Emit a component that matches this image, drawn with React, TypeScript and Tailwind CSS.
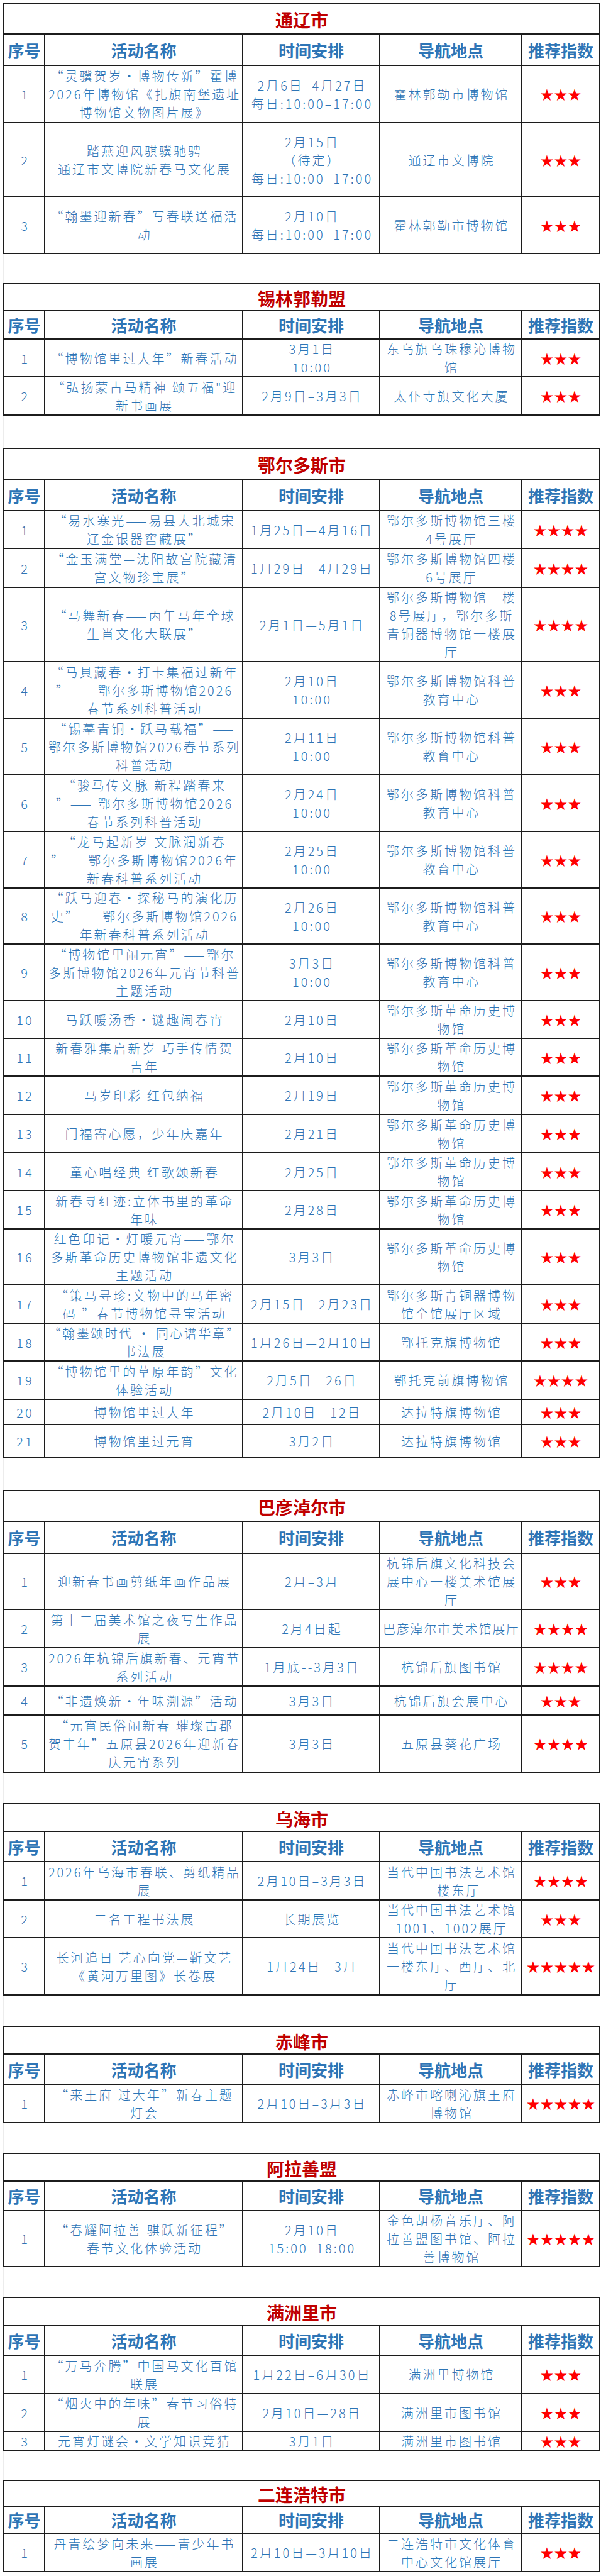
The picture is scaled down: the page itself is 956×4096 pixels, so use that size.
import React from "react";

const K = 0.885;
const BODY_PX = 20;
const MAX_TRACK = 3;
const FONT_STACK = '"Noto Sans CJK SC", "Noto Sans", sans-serif';

type Row = {
  n: string;
  name: string[];
  time: string[];
  loc: string[];
  stars: number;
  h: number;
};

type Section = {
  title: string;
  gap: number;
  titleH: number;
  headH: number;
  rows: Row[];
};

const KEJIAO = ["鄂尔多斯博物馆科普", "教育中心"];
const GEMING = ["鄂尔多斯革命历史博", "物馆"];

const SECTIONS: Section[] = [
  {
    title: "通辽市",
    gap: 5,
    titleH: 57,
    headH: 57,
    rows: [
      { n: "1", name: ["“灵骥贺岁·博物传新”霍博", "2026年博物馆《扎旗南堡遗址", "博物馆文物图片展》"], time: ["2月6日–4月27日", "每日:10:00–17:00"], loc: ["霍林郭勒市博物馆"], stars: 3, h: 102 },
      { n: "2", name: ["踏燕迎风骐骥驰骋", "通辽市文博院新春马文化展"], time: ["2月15日", "（待定）", "每日:10:00–17:00"], loc: ["通辽市文博院"], stars: 3, h: 134 },
      { n: "3", name: ["“翰墨迎新春”写春联送福活", "动"], time: ["2月10日", "每日:10:00–17:00"], loc: ["霍林郭勒市博物馆"], stars: 3, h: 102 },
    ],
  },
  {
    title: "锡林郭勒盟",
    gap: 51,
    titleH: 51,
    headH: 51,
    rows: [
      { n: "1", name: ["“博物馆里过大年”新春活动"], time: ["3月1日", "10:00"], loc: ["东乌旗乌珠穆沁博物", "馆"], stars: 3, h: 68 },
      { n: "2", name: ["“弘扬蒙古马精神 颂五福\"迎", "新书画展"], time: ["2月9日–3月3日"], loc: ["太仆寺旗文化大厦"], stars: 3, h: 69 },
    ],
  },
  {
    title: "鄂尔多斯市",
    gap: 57,
    titleH: 58,
    headH: 57,
    rows: [
      { n: "1", name: ["“易水寒光——易县大北城宋", "辽金银器窖藏展”"], time: ["1月25日—4月16日"], loc: ["鄂尔多斯博物馆三楼", "4号展厅"], stars: 4, h: 68 },
      { n: "2", name: ["“金玉满堂—沈阳故宫院藏清", "宫文物珍宝展”"], time: ["1月29日—4月29日"], loc: ["鄂尔多斯博物馆四楼", "6号展厅"], stars: 4, h: 69 },
      { n: "3", name: ["“马舞新春——丙午马年全球", "生肖文化大联展”"], time: ["2月1日—5月1日"], loc: ["鄂尔多斯博物馆一楼", "8号展厅，鄂尔多斯", "青铜器博物馆一楼展", "厅"], stars: 4, h: 134 },
      { n: "4", name: ["“马具藏春·打卡集福过新年", "”—— 鄂尔多斯博物馆2026", "春节系列科普活动"], time: ["2月10日", "10:00"], loc: KEJIAO, stars: 3, h: 101 },
      { n: "5", name: ["“锡摹青铜·跃马载福”——", "鄂尔多斯博物馆2026春节系列", "科普活动"], time: ["2月11日", "10:00"], loc: KEJIAO, stars: 3, h: 102 },
      { n: "6", name: ["“骏马传文脉 新程踏春来", "”—— 鄂尔多斯博物馆2026", "春节系列科普活动"], time: ["2月24日", "10:00"], loc: KEJIAO, stars: 3, h: 102 },
      { n: "7", name: ["“龙马起新岁  文脉润新春", "”——鄂尔多斯博物馆2026年", "新春科普系列活动"], time: ["2月25日", "10:00"], loc: KEJIAO, stars: 3, h: 102 },
      { n: "8", name: ["“跃马迎春·探秘马的演化历", "史”——鄂尔多斯博物馆2026", "年新春科普系列活动"], time: ["2月26日", "10:00"], loc: KEJIAO, stars: 3, h: 100 },
      { n: "9", name: ["“博物馆里闹元宵”——鄂尔", "多斯博物馆2026年元宵节科普", "主题活动"], time: ["3月3日", "10:00"], loc: KEJIAO, stars: 3, h: 102 },
      { n: "10", name: ["马跃暖汤香·谜趣闹春宵"], time: ["2月10日"], loc: GEMING, stars: 3, h: 68 },
      { n: "11", name: ["新春雅集启新岁 巧手传情贺", "吉年"], time: ["2月10日"], loc: GEMING, stars: 3, h: 68 },
      { n: "12", name: ["马岁印彩 红包纳福"], time: ["2月19日"], loc: GEMING, stars: 3, h: 68 },
      { n: "13", name: ["门福寄心愿，少年庆嘉年"], time: ["2月21日"], loc: GEMING, stars: 3, h: 69 },
      { n: "14", name: ["童心唱经典 红歌颂新春"], time: ["2月25日"], loc: GEMING, stars: 3, h: 68 },
      { n: "15", name: ["新春寻红迹:立体书里的革命", "年味"], time: ["2月28日"], loc: GEMING, stars: 3, h: 69 },
      { n: "16", name: ["红色印记·灯暖元宵——鄂尔", "多斯革命历史博物馆非遗文化", "主题活动"], time: ["3月3日"], loc: GEMING, stars: 3, h: 101 },
      { n: "17", name: ["“策马寻珍:文物中的马年密", "码 ”春节博物馆寻宝活动"], time: ["2月15日—2月23日"], loc: ["鄂尔多斯青铜器博物", "馆全馆展厅区域"], stars: 3, h: 68 },
      { n: "18", name: ["“翰墨颂时代 · 同心谱华章”", "书法展"], time: ["1月26日—2月10日"], loc: ["鄂托克旗博物馆"], stars: 3, h: 68 },
      { n: "19", name: ["“博物馆里的草原年韵”文化", "体验活动"], time: ["2月5日—26日"], loc: ["鄂托克前旗博物馆"], stars: 4, h: 69 },
      { n: "20", name: ["博物馆里过大年"], time: ["2月10日—12日"], loc: ["达拉特旗博物馆"], stars: 3, h: 46 },
      { n: "21", name: ["博物馆里过元宵"], time: ["3月2日"], loc: ["达拉特旗博物馆"], stars: 3, h: 59 },
    ],
  },
  {
    title: "巴彦淖尔市",
    gap: 57,
    titleH: 58,
    headH: 57,
    rows: [
      { n: "1", name: ["迎新春书画剪纸年画作品展"], time: ["2月–3月"], loc: ["杭锦后旗文化科技会", "展中心一楼美术馆展", "厅"], stars: 3, h: 101 },
      { n: "2", name: ["第十二届美术馆之夜写生作品", "展"], time: ["2月4日起"], loc: ["巴彦淖尔市美术馆展厅"], stars: 4, h: 69 },
      { n: "3", name: ["2026年杭锦后旗新春、元宵节", "系列活动"], time: ["1月底--3月3日"], loc: ["杭锦后旗图书馆"], stars: 4, h: 68 },
      { n: "4", name: ["“非遗焕新·年味溯源”活动"], time: ["3月3日"], loc: ["杭锦后旗会展中心"], stars: 3, h: 53 },
      { n: "5", name: ["“元宵民俗闹新春 璀璨古郡", "贺丰年”五原县2026年迎新春", "庆元宵系列"], time: ["3月3日"], loc: ["五原县葵花广场"], stars: 4, h: 102 },
    ],
  },
  {
    title: "乌海市",
    gap: 54,
    titleH: 53,
    headH: 54,
    rows: [
      { n: "1", name: ["2026年乌海市春联、剪纸精品", "展"], time: ["2月10日–3月3日"], loc: ["当代中国书法艺术馆", "一楼东厅"], stars: 4, h: 69 },
      { n: "2", name: ["三名工程书法展"], time: ["长期展览"], loc: ["当代中国书法艺术馆", "1001、1002展厅"], stars: 3, h: 68 },
      { n: "3", name: ["长河追日 艺心向党—靳文艺", "《黄河万里图》长卷展"], time: ["1月24日—3月"], loc: ["当代中国书法艺术馆", "一楼东厅、西厅、北", "厅"], stars: 5, h: 102 },
    ],
  },
  {
    title: "赤峰市",
    gap: 54,
    titleH: 53,
    headH: 54,
    rows: [
      { n: "1", name: ["“来王府 过大年”新春主题", "灯会"], time: ["2月10日–3月3日"], loc: ["赤峰市喀喇沁旗王府", "博物馆"], stars: 5, h: 69 },
    ],
  },
  {
    title: "阿拉善盟",
    gap: 53,
    titleH: 52,
    headH: 53,
    rows: [
      { n: "1", name: ["“春耀阿拉善 骐跃新征程”", "春节文化体验活动"], time: ["2月10日", "15:00–18:00"], loc: ["金色胡杨音乐厅、阿", "拉善盟图书馆、阿拉", "善博物馆"], stars: 5, h: 101 },
    ],
  },
  {
    title: "满洲里市",
    gap: 53,
    titleH: 53,
    headH: 53,
    rows: [
      { n: "1", name: ["“万马奔腾”中国马文化百馆", "联展"], time: ["1月22日–6月30日"], loc: ["满洲里博物馆"], stars: 3, h: 69 },
      { n: "2", name: ["“烟火中的年味”春节习俗特", "展"], time: ["2月10日—28日"], loc: ["满洲里市图书馆"], stars: 3, h: 68 },
      { n: "3", name: ["元宵灯谜会·文学知识竞猜"], time: ["3月1日"], loc: ["满洲里市图书馆"], stars: 3, h: 35 },
    ],
  },
  {
    title: "二连浩特市",
    gap: 50,
    titleH: 49,
    headH: 49,
    rows: [
      { n: "1", name: ["丹青绘梦向未来——青少年书", "画展"], time: ["2月10日—3月10日"], loc: ["二连浩特市文化体育", "中心文化馆展厅"], stars: 3, h: 68 },
    ],
  },
];

// available inner widths of the five columns (scaled)
const AVAIL = [60, 306, 210, 218, 118];

let measureCtx: CanvasRenderingContext2D | null = null;
function measure(text: string, font: string): number {
  if (typeof document === "undefined") return text.length * BODY_PX;
  if (!measureCtx) {
    const c = document.createElement("canvas");
    measureCtx = c.getContext("2d");
  }
  if (!measureCtx) return text.length * BODY_PX;
  measureCtx.font = font;
  return measureCtx.measureText(text).width;
}

function Line({ text, avail }: { text: string; avail: number }) {
  const w = measure(text, `300 ${BODY_PX}px ${FONT_STACK}`);
  const n = Array.from(text).length;
  let ls = MAX_TRACK;
  if (w + n * ls > avail) ls = Math.max(-3, (avail - w) / n);
  return (
    <div className="whitespace-nowrap" style={{ letterSpacing: `${ls}px`, paddingLeft: `${ls}px` }}>
      {text}
    </div>
  );
}

const GRID = "grid grid-cols-[67px_315px_218px_226px_124px]";
const CELL = "flex flex-col items-center justify-center border-r-2 border-b-2 border-[#1c1c1c] overflow-visible";

function Cell({ lines, col, first }: { lines: string[]; col: number; first?: boolean }) {
  return (
    <div className={`${CELL} ${first ? "border-l-2" : ""} text-[20px] leading-[29px] font-light text-[#2e75b6]`}>
      {lines.map((l, i) => (
        <Line key={i} text={l} avail={AVAIL[col]} />
      ))}
    </div>
  );
}

type Block =
  | { kind: "gap"; h: number; faint: boolean }
  | { kind: "title"; h: number; title: string }
  | { kind: "head"; h: number }
  | { kind: "row"; h: number; row: Row };

function buildBlocks(): { block: Block; y0: number; y1: number }[] {
  const out: { block: Block; y0: number; y1: number }[] = [];
  let y = 0;
  const push = (b: Block) => {
    out.push({ block: b, y0: y, y1: y + b.h });
    y += b.h;
  };
  SECTIONS.forEach((s, si) => {
    push({ kind: "gap", h: s.gap, faint: si > 0 });
    push({ kind: "title", h: s.titleH, title: s.title });
    push({ kind: "head", h: s.headH });
    s.rows.forEach((r) => push({ kind: "row", h: r.h, row: r }));
  });
  return out;
}

const HEADERS = ["序号", "活动名称", "时间安排", "导航地点", "推荐指数"];

export default function App() {
  const blocks = buildBlocks();
  return (
    <div className="w-[956px] min-h-[4096px] bg-white font-['Noto_Sans_CJK_SC','Noto_Sans',sans-serif]">
      <div className="ml-[5px] w-[950px]">
        {blocks.map(({ block, y0, y1 }, i) => {
          const h = Math.round(y1 * K) - Math.round(y0 * K);
          if (block.kind === "gap") {
            return (
              <div key={i} className={GRID} style={{ height: `${h}px` }}>
                {[0, 1, 2, 3, 4].map((c) => (
                  <div
                    key={c}
                    className={`${block.faint ? "border-r border-[#ececec]" : ""} ${block.faint && c === 0 ? "border-l" : ""}`}
                  />
                ))}
              </div>
            );
          }
          if (block.kind === "title") {
            return (
              <div
                key={i}
                className="flex items-center justify-center border-2 border-[#1c1c1c] text-[28px] font-bold text-[#c00000] pt-[3px]"
                style={{ height: `${h}px` }}
              >
                {block.title}
              </div>
            );
          }
          if (block.kind === "head") {
            return (
              <div key={i} className={GRID} style={{ height: `${h}px` }}>
                {HEADERS.map((t, c) => (
                  <div
                    key={c}
                    className={`${CELL} ${c === 0 ? "border-l-2" : ""} text-[26px] font-bold text-[#2e75b6] whitespace-nowrap`}
                  >
                    {t}
                  </div>
                ))}
              </div>
            );
          }
          const r = block.row;
          return (
            <div key={i} className={GRID} style={{ height: `${h}px` }}>
              <Cell lines={[r.n]} col={0} first />
              <Cell lines={r.name} col={1} />
              <Cell lines={r.time} col={2} />
              <Cell lines={r.loc} col={3} />
              <div className={`${CELL}`}>
                <span className="text-[21px] leading-none tracking-[1px] text-[#ff0000] whitespace-nowrap pl-[1px]">
                  {"★".repeat(r.stars)}
                </span>
              </div>
            </div>
          );
        })}
      </div>
    </div>
  );
}
